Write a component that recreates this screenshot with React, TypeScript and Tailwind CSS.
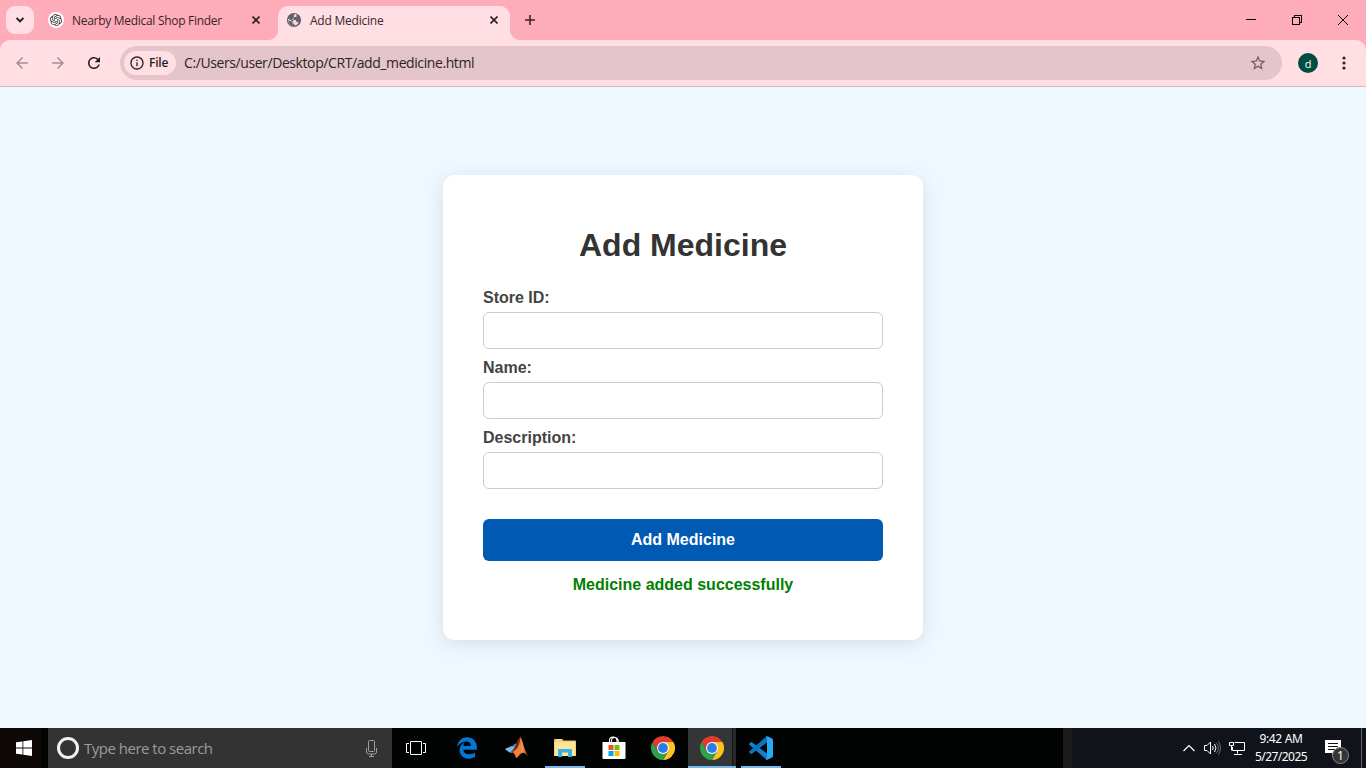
import type { ReactNode } from "react";
import { MdArrowBack, MdArrowForward, MdInfoOutline, MdRefresh, MdStarBorder } from "react-icons/md";
import { SiOpenai } from "react-icons/si";
import { FaEdgeLegacy } from "react-icons/fa";

function CloseGlyph() {
  return (
    <svg width="8" height="8" viewBox="0 0 8 8" className="shrink-0" stroke="#2b2024" strokeWidth="1.6">
      <path d="M.5.5l7 7M7.5.5l-7 7" />
    </svg>
  );
}

function Globe() {
  return (
    <svg width="16" height="16" viewBox="0 0 16 16" className="shrink-0">
      <circle cx="8" cy="8" r="7.100" fill="#5f6368" />
      <path d="M8.200 2.300h2.300v1.900q0 .900-.900.900H8.100v1.200q0 .700-.700.700H6.200v1.100h3.200q.9 0 .9.900v1h1.300q.8 0 1 .700-1.300 2.300-4.100 3v-1.500q-1.300 0-1.300-1.300V9.900L2.400 6.500Q2 8 2.300 9.400q.9 3.300 4.100 4.200" fill="#ffdee4" opacity=".95" />
      <path d="M2.400 8.200l4 1.500v3.900Q3 12.600 2.400 8.200z" fill="#5f6368" />
    </svg>
  );
}

function TitleBar() {
  return (
    <header className="flex h-10 items-start bg-[#ffacba] text-[#3a2529]">
      <button aria-label="Search tabs" className="mt-[6px] ml-[6px] flex size-7 items-center justify-center rounded-[9px] bg-[#ffdee4]">
        <svg width="8" height="6" viewBox="0 0 8 6" fill="none" stroke="#1f1f1f" strokeWidth="1.9">
          <path d="M.6 1l3.4 3.4L7.4 1" />
        </svg>
      </button>
      <div className="ml-[14px] flex h-10 w-[212px] items-center">
        <span className="flex size-4 shrink-0 items-center justify-center rounded-full bg-white">
          <SiOpenai size={12} color="#333" />
        </span>
        <span className="ml-2 flex-1 pt-px text-[12px] tracking-[-0.29px] whitespace-nowrap">Nearby Medical Shop Finder</span>
        <CloseGlyph />
      </div>
      <div className="relative mt-[6px] ml-[18px] flex h-[34px] w-[232px] items-center rounded-t-[10px] bg-[#ffdee4] pr-3 pb-[6px] pl-2">
        <span className="absolute bottom-0 -left-[10px] size-[10px] bg-[radial-gradient(circle_at_0_0,transparent_9.5px,#ffdee4_10.5px)]" />
        <span className="absolute -right-[10px] bottom-0 size-[10px] bg-[radial-gradient(circle_at_100%_0,transparent_9.5px,#ffdee4_10.5px)]" />
        <Globe />
        <span className="ml-2 flex-1 pt-px text-[12px] tracking-[-0.22px] whitespace-nowrap">Add Medicine</span>
        <CloseGlyph />
      </div>
      <div className="flex h-10 flex-1 items-center pl-[15px]">
        <svg width="10" height="10" viewBox="0 0 10 10" stroke="#3a2529" strokeWidth="1.6">
          <path d="M5 0v10M0 5h10" />
        </svg>
      </div>
      <div className="flex h-10 w-[138px] items-center">
        <span className="flex w-[46px] justify-center">
          <svg width="10" height="10" shapeRendering="crispEdges" stroke="#000"><path d="M0 4.5h10" /></svg>
        </span>
        <span className="flex w-[46px] justify-center">
          <svg width="10" height="10" fill="none" shapeRendering="crispEdges" stroke="#000">
            <path d="M.5 2.5h7v7h-7zM2.5 2.500V.5h7v7h-2" />
          </svg>
        </span>
        <span className="flex w-[46px] justify-center">
          <svg width="10" height="10" stroke="#000"><path d="M0 0l10 10M10 0L0 10" /></svg>
        </span>
      </div>
    </header>
  );
}

function Toolbar() {
  return (
    <div className="h-[47px] bg-[#ffacba]">
      <nav className="flex h-[47px] items-center rounded-t-[10px] border-b border-[#d5b8c1] bg-[#ffdee4]">
        <MdArrowBack size={18} color="#a98f96" className="ml-[13px]" />
        <MdArrowForward size={18} color="#a98f96" className="ml-[18px]" />
        <MdRefresh size={18} color="#1f1f1f" className="ml-[18px]" />
        <div className="ml-[17px] flex h-[34px] w-[1162px] items-center rounded-full bg-[#e4c5cb] pl-1">
          <span className="flex h-6 w-[52px] items-center rounded-full bg-[#ffdee4] pl-[5px]">
            <MdInfoOutline size={16} color="#2b2427" />
            <span className="ml-1 text-[12px] font-semibold tracking-[-0.2px] text-[#1f1f1f]">File</span>
          </span>
          <span className="ml-2 flex-1 pb-px text-[14px] tracking-[-0.41px] text-[#2b2427]">C:/Users/user/Desktop/CRT/add_medicine.html</span>
          <MdStarBorder size={18} color="#6b5d61" className="mr-[15px]" />
        </div>
        <span className="ml-4 flex size-5 items-center justify-center rounded-full bg-[#004d40] text-[11px] leading-none text-white">d</span>
        <svg width="4" height="16" className="ml-6" fill="#2b2427">
          <circle cx="2" cy="3" r="1.6" /><circle cx="2" cy="8" r="1.6" /><circle cx="2" cy="13" r="1.6" />
        </svg>
      </nav>
    </div>
  );
}

function Field({ label }: { label: string }) {
  return (
    <label className="mb-[9px] block text-[16px] leading-[18px] font-bold text-[#444]">
      <span className="block h-[18px] pt-px">{label}</span>
      <input className="mt-[6px] block h-[37px] w-full rounded-[6px] border border-[#ccc] bg-white px-[10px] outline-none" />
    </label>
  );
}

function MedicineForm() {
  return (
    <main className="flex h-[641px] items-center justify-center bg-[#f0f8ff] font-['Liberation_Sans',Arial,sans-serif]">
      <form className="h-[465px] w-[480px] rounded-[12px] bg-white px-10 pt-[52px] shadow-[0_4px_20px_rgba(0,0,0,0.1)]">
        <h1 className="mb-[25px] text-center text-[32px] leading-[36px] font-bold text-[#333]">Add Medicine</h1>
        <Field label="Store ID:" />
        <Field label="Name:" />
        <Field label="Description:" />
        <button type="button" className="mt-[30px] block h-[42px] w-full rounded-[6px] bg-[#0059b3] text-[16px] font-bold text-white">Add Medicine</button>
        <p className="mt-[15px] text-center text-[16px] leading-[18px] font-bold text-[#008000]">Medicine added successfully</p>
      </form>
    </main>
  );
}

function ChromeLogo() {
  return (
    <svg width="24" height="24" viewBox="0 0 24 24">
      <path d="M12 12V6h10.400A12 12 0 0 1 12 24l5.200-9Z" fill="#fcc31e" />
      <path d="M1.610 6A12 12 0 0 0 12 24l5.200-9L12 12 6.800 15Z" fill="#2da14c" />
      <path d="M1.610 6A12 12 0 0 1 22.390 6H12L6.800 9v6Z" fill="#e33b2e" />
      <circle cx="12" cy="12" r="6" fill="#fff" />
      <circle cx="12" cy="12" r="4.900" fill="#2a7bea" />
    </svg>
  );
}

function MatlabLogo() {
  return (
    <svg width="24" height="24" viewBox="0 0 24 24">
      <defs>
        <linearGradient id="flame" x1="0" x2="1">
          <stop offset="0" stopColor="#6b1c14" /><stop offset=".45" stopColor="#d9501f" />
          <stop offset=".65" stopColor="#f5a04a" /><stop offset="1" stopColor="#b8321b" />
        </linearGradient>
      </defs>
      <path d="M1 13l6-2.500c2-.5 3-1.500 4-3l2 1-4 8-2 .500z" fill="#4f9fce" />
      <path d="M1 13l4.500 3.500 5-5L7 10.500z" fill="#83bfe0" />
      <path d="M7 16c4-2 5-11 9.500-15C19 5 20 14 24 20c-3-2.500-4-4-6-3-2.500 1-3.500 4.500-6 5-1-3-2-5.500-5-6z" fill="url(#flame)" />
      <path d="M16.500 1c-2 5-4 12-8 15 2 1 3 3 3.500 6 3-2 4.500-5 5-9z" fill="#ed8238" />
      <path d="M16.500 1c-4 3.500-4.500 11-8.500 14.500 5-1 7.500-6 8.500-14.500z" fill="#70241b" />
    </svg>
  );
}

function FolderLogo() {
  return (
    <svg width="22" height="20" viewBox="0 0 22 20">
      <path d="M0 1.500Q0 1 .5 1h8l1 1.500h11.500q1 0 1 1V18H0z" fill="#e9bd54" />
      <path d="M.5 3.500h21V18H.5z" fill="#ffe59a" />
      <path d="M2 2h5" stroke="#fff7dd" />
      <path d="M4 19v-7q0-1 1-1h12q1 0 1 1v7h-4v-4.500H8V19z" fill="#35b1e5" />
    </svg>
  );
}

function StoreLogo() {
  return (
    <svg width="24" height="24" viewBox="0 0 24 24">
      <path d="M7.500 6V4.500q0-3.500 3.500-3.500t4 3.500V6M9.500 6V4.500q0-3 3-3 3.500 0 4 4.500" fill="none" stroke="#fff" strokeWidth="1.100" />
      <path d="M.500 6h23V22q0 1-1 1h-21q-1 0-1-1z" fill="#fff" />
      <path d="M6.500 9h5v5h-5z" fill="#f05125" /><path d="M12.500 9h5v5h-5z" fill="#7fba00" />
      <path d="M6.500 15h5v5h-5z" fill="#00a4ef" /><path d="M12.500 15h5v5h-5z" fill="#ffb900" />
    </svg>
  );
}

function CodeLogo() {
  return (
    <svg width="24" height="24" viewBox="0 0 24 24">
      <path d="M.4 8.700q-.6-.6 0-1.200L1.700 6.300q.6-.5 1.300 0L18 17.500V24z" fill="#0a84cf" />
      <path d="M.4 15.300q-.6.600 0 1.200l1.300 1.200q.6.500 1.300 0L18 6.500V0z" fill="#0875bb" />
      <path d="M17.800 0L23 2.400q1 .500 1 1.600v16q0 1.100-1 1.600L17.800 24q-.8 0-1.300-.6 1.500.4 1.500-1.300V1.900q0-1.600-1.500-1.300Q17 0 17.800 0z" fill="#29a9f2" />
    </svg>
  );
}

function TaskIcon({ children, open = false, active = false, width = "w-[49px]" }: { children: ReactNode; open?: boolean; active?: boolean; width?: string }) {
  return (
    <div className={`flex h-10 ${width} flex-col items-center ${active ? "bg-[linear-gradient(90deg,#343537_44px,#161718_44px,#161718_45px,#29292a_45px)]" : ""}`}>
      <div className="flex h-[38px] items-center pt-[2px]">{children}</div>
      {open && <span className={`h-[2px] bg-[#76b9ed] ${active ? "w-full" : "w-10"}`} />}
    </div>
  );
}

function Taskbar() {
  return (
    <footer className="flex h-10 bg-[#020303] text-white">
      <div className="flex w-12 items-center border-r-[7px] border-[#020303] bg-[#0d0806] pl-4">
        <svg width="16" height="16" viewBox="0 0 16 16" className="shrink-0" fill="#fff">
          <path d="M0 2.300L6.500 1.400v6.100H0zM7.300 1.300L16 0v7.500H7.300zM0 8.400h6.500v6.200L0 13.700zM7.300 8.400H16V16l-8.700-1.300z" />
        </svg>
      </div>
      <div className="flex w-[344px] items-center bg-[#333] pr-[14px] pl-[9px]">
        <span className="size-[22px] rounded-full border-[3px] border-[#f3f3f3]" />
        <span className="ml-[5px] flex-1 text-[15px] tracking-[-0.5px] text-[#9b9b9b]">Type here to search</span>
        <svg width="13" height="17" viewBox="0 0 13 17" fill="none" stroke="#a0a0a0">
          <rect x="3.500" y=".5" width="6" height="11" rx="1" />
          <path d="M1.500 8v4q0 2 2 2h6q2 0 2-2V8M6.500 14v2.500M4 16.500h5" />
        </svg>
      </div>
      <div className="flex w-12 items-center justify-center">
        <svg width="20" height="14" viewBox="0 0 20 14" fill="none" stroke="#fff">
          <path d="M4.500.5h11v13h-11zM3 2.500H.500v9H3M17 2.500h2.500v9H17" />
        </svg>
      </div>
      <TaskIcon width="w-[54px]"><FaEdgeLegacy size={22} color="#0078d7" /></TaskIcon>
      <TaskIcon width="w-[43px]"><MatlabLogo /></TaskIcon>
      <TaskIcon width="w-[55px]" open><FolderLogo /></TaskIcon>
      <TaskIcon width="w-[43px]"><StoreLogo /></TaskIcon>
      <TaskIcon width="w-[53px]"><span className="pl-[2px]"><ChromeLogo /></span></TaskIcon>
      <TaskIcon width="w-12" open active><ChromeLogo /></TaskIcon>
      <TaskIcon width="w-[50px]" open><CodeLogo /></TaskIcon>
      <div className="flex-1" />
      <div className="flex w-[303px] items-center border-l-[9px] border-[#1b1b1b] bg-[#10141a] pl-[111px] font-['Noto_Sans','Open_Sans',sans-serif]">
        <svg width="12" height="8" viewBox="0 0 12 8" fill="none" stroke="#fff" strokeWidth="1.200" className="shrink-0"><path d="M.5 7L6 1.500 11.500 7" /></svg>
        <svg width="17" height="14" viewBox="0 0 17 14" fill="none" stroke="#fff" className="ml-[9px] shrink-0">
          <path d="M.5 4.500h2.500l3.500-3.500v12L3 9.500H.5zM8.500 5q1.500 2 0 4M10.500 3q3 4 0 8" />
          <path d="M12.500 2q4 5 0 10M14.500.5q4 6.500 0 13" stroke="#6b6e72" />
        </svg>
        <svg width="17" height="15" viewBox="0 0 17 15" fill="none" stroke="#fff" className="ml-2 shrink-0">
          <path d="M5.500 1.500h10v8h-12V6M8.500 9.500v3M5 13.500h8M.5 1.500h4v3h-4zM2.500 5v4.500" />
        </svg>
        <div className="w-[70px] shrink-0 text-center text-[12px] leading-[18px] whitespace-nowrap">
          <p className="tracking-[-0.34px]">9:42 AM</p>
          <p className="tracking-[-0.55px]">5/27/2025</p>
        </div>
        <div className="relative ml-[9px] h-8 w-[27px] shrink-0">
          <svg width="17" height="17" viewBox="0 0 17 17" className="mt-2">
            <path d="M0 0h16v13H10l-3 3v-3H0z" fill="#fff" />
            <path d="M3 3.500h10M3 6.500h10M3 9.500h7" stroke="#10141a" />
          </svg>
          <span className="absolute top-[15px] left-[7px] flex size-[17px] items-center justify-center rounded-full border border-[#898989] bg-[#353535] text-[12px]">1</span>
        </div>
        <span className="mr-[4px] ml-auto h-10 w-px bg-[#66696c]" />
      </div>
    </footer>
  );
}

export default function App() {
  return (
    <div className="flex h-[768px] w-[1366px] flex-col overflow-hidden font-['Open_Sans','Noto_Sans',sans-serif]">
      <TitleBar />
      <Toolbar />
      <MedicineForm />
      <Taskbar />
    </div>
  );
}
